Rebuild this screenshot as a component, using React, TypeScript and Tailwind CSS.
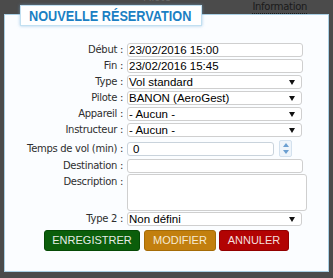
import type { ReactNode } from 'react';

const labelFont = { fontFamily: '"DejaVu Sans", Verdana, sans-serif' };
const fieldFont = { fontFamily: '"Liberation Sans", Arial, sans-serif' };

function Row({ label, children, top = false, className = '' }: { label: string; children: ReactNode; top?: boolean; className?: string }) {
  return (
    <div className={`flex ${top ? 'items-start' : 'items-center'} ${className}`}>
      <div
        style={labelFont}
        className={`w-[118px] shrink-0 text-right text-[10px] leading-[12px] tracking-[-0.3px] text-[#2e2e2e] ${top ? 'pt-[2px]' : ''}`}
      >
        {label} :
      </div>
      <div className="ml-[4px]">{children}</div>
    </div>
  );
}

function TextInput({ value = '', width = 'w-[176px]' }: { value?: string; width?: string }) {
  return (
    <div
      style={fieldFont}
      className={`${width} h-[14px] rounded-[3px] border border-[#cfcfcf] bg-white px-[1px] text-[11.5px] leading-[12px] text-black`}
    >
      {value}
    </div>
  );
}

function Select({ value }: { value: string }) {
  return (
    <div
      style={fieldFont}
      className="flex h-[14px] w-[175px] items-center justify-between rounded-[3px] border border-[#cfcfcf] bg-white pl-[1px] pr-[6px] text-[11.5px] leading-[12px] text-black"
    >
      <span>{value}</span>
      <svg width="6" height="5" viewBox="0 0 6 5">
        <path d="M0 0h6L3 5z" fill="#111" />
      </svg>
    </div>
  );
}

export default function App() {
  return (
    <div className="relative h-[278px] w-[333px] overflow-hidden bg-[#4b4b4b]">
      {/* page behind the overlay */}
      <div style={labelFont} className="flex h-[14px] text-[10px] leading-[12px]">
        <span className="ml-[143px] mt-[-8px] text-[#6a6a6a]">Pilote</span>
        <span className="ml-auto mr-[26px] h-[14px] border-b border-dotted border-[#1a1a1a] pt-[1px] tracking-[-0.3px] text-[#1a1a1a]">
          Information
        </span>
      </div>

      <div className="relative ml-[4px] h-[258px] w-[325px] border border-[#a9cfe4] bg-[#fbfdff]">
        <div className="absolute left-[15px] top-[-10px] flex h-[21px] w-[182px] items-center overflow-hidden border border-[#c2e0f1] bg-white pl-[8px] shadow-[0_0_3px_rgba(110,170,215,0.6)]">
          <span
            style={fieldFont}
            className="inline-block origin-left scale-x-[0.82] whitespace-nowrap text-[15.5px] font-bold leading-[18px] text-[#1b7fc3]"
          >
            NOUVELLE RÉSERVATION
          </span>
        </div>

        <div className="pt-[28px]">
          <Row label="Début">
            <TextInput value="23/02/2016 15:00" />
          </Row>
          <Row label="Fin" className="mt-[2px]">
            <TextInput value="23/02/2016 15:45" />
          </Row>
          <Row label="Type" className="mt-[2px]">
            <Select value="Vol standard" />
          </Row>
          <Row label="Pilote" className="mt-[2px]">
            <Select value="BANON (AeroGest)" />
          </Row>
          <Row label="Appareil" className="mt-[2px]">
            <Select value="- Aucun -" />
          </Row>
          <Row label="Instructeur" className="mt-[2px]">
            <Select value="- Aucun -" />
          </Row>
          <Row label="Temps de vol (min)" className="mt-[3px]">
            <div className="flex items-center">
              <div
                style={fieldFont}
                className="h-[14px] w-[147px] rounded-[3px] border border-[#c9d3dc] bg-white pl-[5px] text-[11.5px] leading-[12px] text-black"
              >
                0
              </div>
              <div className="ml-[5px] flex h-[17px] w-[13px] flex-col items-center justify-center gap-[3px] rounded-[2px] border border-[#d3e1ee] bg-[#eef4fa]">
                <svg width="6" height="4" viewBox="0 0 6 4">
                  <path d="M0 4L3 0l3 4z" fill="#6b9fd1" />
                </svg>
                <svg width="6" height="4" viewBox="0 0 6 4">
                  <path d="M0 0h6L3 4z" fill="#6b9fd1" />
                </svg>
              </div>
            </div>
          </Row>
          <Row label="Destination" className="mt-[2px]">
            <TextInput />
          </Row>
          <Row label="Description" top className="mt-[1px]">
            <div className="h-[37px] w-[180px] rounded-[3px] border border-[#cfcfcf] bg-white" />
          </Row>
          <Row label="Type 2" className="mt-[1px]">
            <Select value="Non défini" />
          </Row>

          <div style={fieldFont} className="mt-[4px] flex justify-center text-[11px]">
            <button className="h-[21px] w-[96px] rounded-[3px] border border-[#064a06] bg-[#0b5e0b] text-[#e6ece6]">
              ENREGISTRER
            </button>
            <button className="ml-[4px] h-[21px] w-[72px] rounded-[3px] border border-[#a56c08] bg-[#c27f0e] text-[#f6ead2]">
              MODIFIER
            </button>
            <button className="ml-[3px] h-[21px] w-[70px] rounded-[3px] border border-[#930000] bg-[#b20303] text-[#f3dede]">
              ANNULER
            </button>
          </div>
        </div>
      </div>
    </div>
  );
}
